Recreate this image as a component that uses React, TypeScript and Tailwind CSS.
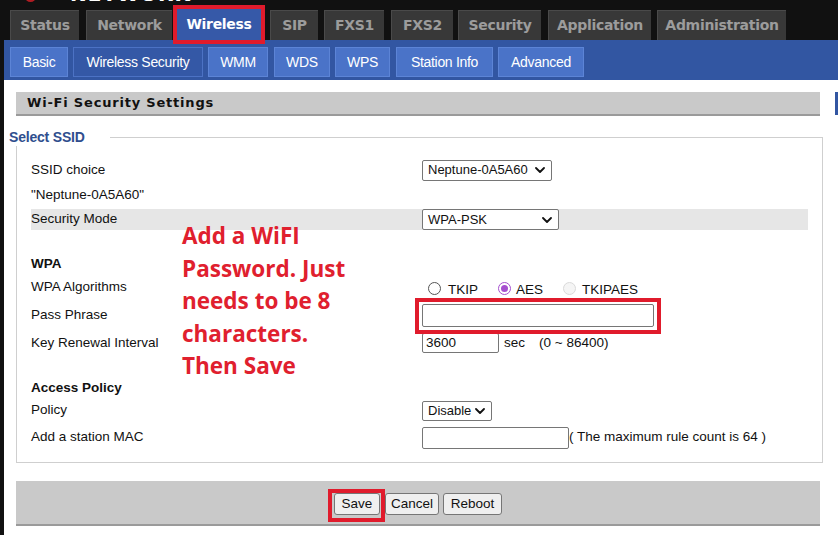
import type { ReactNode } from "react";

const topTabs = [
  { label: "Status", cls: "ml-[10px] w-[69px]" },
  { label: "Network", cls: "ml-[7px] w-[86px]" },
  { label: "Wireless", cls: "ml-[5px] w-[84px]", active: true },
  { label: "SIP", cls: "ml-[9px] w-[48px]" },
  { label: "FXS1", cls: "ml-[6px] w-[60px]" },
  { label: "FXS2", cls: "ml-[7px] w-[62px]" },
  { label: "Security", cls: "ml-[5px] w-[83px]" },
  { label: "Application", cls: "ml-[7px] w-[103px]" },
  { label: "Administration", cls: "ml-[6px] w-[129px]" },
];

const subTabs = [
  { label: "Basic", cls: "ml-[6px] w-[58px]" },
  { label: "Wireless Security", cls: "ml-[5px] w-[130px]", active: true },
  { label: "WMM", cls: "ml-[5px] w-[60px]" },
  { label: "WDS", cls: "ml-[6px] w-[56px]" },
  { label: "WPS", cls: "ml-[5px] w-[55px]" },
  { label: "Station Info", cls: "ml-[6px] w-[97px]" },
  { label: "Advanced", cls: "ml-[5px] w-[86px]" },
];

function Chevron() {
  return (
    <svg viewBox="0 0 10 6" className="w-[10px] h-[6px] shrink-0" fill="none" stroke="#111" strokeWidth={1.8}>
      <path d="M1 1l4 4 4-4" strokeLinecap="round" strokeLinejoin="round" />
    </svg>
  );
}

// red highlight box drawn over an element
function Mark({ children, box }: { children: ReactNode; box: string }) {
  return (
    <div className="relative">
      {children}
      <span className={`absolute border-4 border-[#e01b2c] pointer-events-none ${box}`} />
    </div>
  );
}

function Select({ value, cls }: { value: string; cls: string }) {
  return (
    <div className={`flex items-center justify-between border border-[#767676] rounded-[2px] bg-white pl-[5px] pr-[6px] text-[13px] ${cls}`}>
      <span>{value}</span>
      <Chevron />
    </div>
  );
}

function Row({ label, cls, children, bold }: { label?: string; cls: string; children?: ReactNode; bold?: boolean }) {
  return (
    <div className={`flex items-center ${cls}`}>
      <div className={`w-[391px] shrink-0 ${bold ? "font-bold" : ""}`}>{label}</div>
      <div className="flex items-center">{children}</div>
    </div>
  );
}

function Radio({ state }: { state: "off" | "on" | "disabled" }) {
  if (state === "on")
    return (
      <span className="w-[13px] h-[13px] shrink-0 rounded-full border-[1.5px] border-[#a64fcf] flex items-center justify-center">
        <span className="w-[7px] h-[7px] rounded-full bg-[#a64fcf]" />
      </span>
    );
  return (
    <span
      className={`block w-[13px] h-[13px] shrink-0 rounded-full border ${
        state === "off" ? "border-[#555] bg-white" : "border-[#dadada] bg-[#f5f5f5]"
      }`}
    />
  );
}

export default function App() {
  return (
    <div className="relative w-[838px] h-[535px] overflow-hidden bg-[#111] font-['Liberation_Sans',Arial,sans-serif] text-[13.5px] text-[#111]">
      {/* logo remnant at the very top */}
      <div className="h-[10px] overflow-hidden flex items-start pl-[25px]">
        <span className="-mt-[9px] w-[11px] h-[11px] rounded-full bg-[#b01c22]" />
        <span className="ml-[34px] -mt-[16px] text-[20px] leading-[20px] font-bold text-white font-['DejaVu_Sans',sans-serif] tracking-[1px]">
          NETWORK
        </span>
      </div>

      {/* top tabs */}
      <div className="flex items-end h-[30px]">
        {topTabs.map((t) =>
          t.active ? (
            <div key={t.label} className={t.cls}>
              <Mark box="-inset-[4px]">
                <div className="h-[31px] bg-[#3659a8] text-white flex items-center justify-center font-bold text-[14px] font-['DejaVu_Sans',sans-serif] tracking-[-0.3px]">
                  {t.label}
                </div>
              </Mark>
            </div>
          ) : (
            <div
              key={t.label}
              className={`${t.cls} h-[30px] bg-[#383838] border-t border-l border-[#4a4a4a] text-[#9c9c9c] flex items-center justify-center font-bold text-[14px] font-['DejaVu_Sans',sans-serif] tracking-[-0.3px]`}
            >
              {t.label}
            </div>
          )
        )}
      </div>

      <div className="flex">
        <div className="w-[4px] shrink-0" />
        <div className="flex-1 bg-white h-[495px]">
          {/* sub navigation */}
          <div className="h-[40px] bg-[#3256a2] flex items-start pt-[7px]">
            {subTabs.map((t) => (
              <div
                key={t.label}
                className={`${t.cls} h-[30px] flex items-center justify-center text-white text-[14px] tracking-[-0.3px] border ${
                  t.active ? "bg-[#3458a6] border-[#4c72c4]" : "bg-[#4a73c8] border-[#5c84d6]"
                }`}
              >
                {t.label}
              </div>
            ))}
          </div>

          {/* section header */}
          <div className="flex mt-[12px]">
            <div className="ml-[12px] w-[804px] h-[24px] bg-[#c9c9c9] border-b-2 border-[#9a9a9a] flex items-center pl-[11px] font-bold text-[13px] tracking-[0.8px] font-['DejaVu_Sans',sans-serif] text-[#111]">
              Wi-Fi Security Settings
            </div>
            <div className="ml-[15px] w-[3px] h-[23px] bg-[#3256a2]" />
          </div>

          {/* legend */}
          <div className="flex items-start h-[18px] mt-[12px]">
            <div className="ml-[5px] w-[101px] font-bold text-[14px] leading-[18px] text-[#2f4e8e] tracking-[-0.2px]">Select SSID</div>
            <div className="flex-1 mr-[15px] mt-[9px] h-[9px] border-t border-r border-[#cfcfcf]" />
          </div>

          {/* fieldset */}
          <div className="ml-[12px] w-[807px] border-x border-b border-[#cfcfcf] pt-[13px] pb-[9px] px-[14px]">
            <Row label="SSID choice" cls="h-[22px]">
              <Select value="Neptune-0A5A60" cls="w-[130px] h-[21px]" />
            </Row>
            <Row label={'"Neptune-0A5A60"'} cls="h-[28px]" />
            <Row label="Security Mode" cls="h-[21px] bg-[#e6e6e6]">
              <Select value="WPA-PSK" cls="w-[137px] h-[21px]" />
            </Row>
            <div className="h-[23px]" />
            <Row label="WPA" cls="h-[22px]" bold />
            <Row label="WPA Algorithms" cls="h-[25px]">
              <div className="flex items-center pl-[6px] pt-[1px]">
                <Radio state="off" />
                <span className="ml-[7px] mt-[4px]">TKIP</span>
                <span className="ml-[20px]">
                  <Radio state="on" />
                </span>
                <span className="ml-[5px] mt-[4px]">AES</span>
                <span className="ml-[20px]">
                  <Radio state="disabled" />
                </span>
                <span className="ml-[6px] mt-[4px]">TKIPAES</span>
              </div>
            </Row>
            <Row label="Pass Phrase" cls="h-[30px]">
              <Mark box="-left-[7px] -right-[7px] -top-[6px] -bottom-[7px]">
                <div className="w-[232px] h-[23px] border border-[#767676] rounded-[2px]" />
              </Mark>
            </Row>
            <Row label="Key Renewal Interval" cls="h-[26px]">
              <div className="w-[77px] h-[20px] border border-[#767676] rounded-[2px] flex items-center pl-[3px]">3600</div>
              <span className="ml-[5px]">sec</span>
              <span className="ml-[14px]">(0 ~ 86400)</span>
            </Row>
            <div className="h-[21px]" />
            <Row label="Access Policy" cls="h-[22px]" bold />
            <Row label="Policy" cls="h-[23px]">
              <Select value="Disable" cls="w-[70px] h-[20px] pr-[5px]" />
            </Row>
            <Row label="Add a station MAC" cls="h-[31px]">
              <div className="w-[147px] h-[22px] border border-[#767676] rounded-[2px]" />
              <span>( The maximum rule count is 64 )</span>
            </Row>
          </div>

          {/* button bar */}
          <div className="mt-[18px] ml-[12px] w-[804px] h-[45px] bg-[#c9c9c9] border-b-2 border-[#9a9a9a] flex items-center justify-center gap-[4px] pt-[2px]">
            <div className="mr-[1px]">
              <Mark box="-left-[6px] -right-[5px] -top-[4px] -bottom-[7px]">
                <button type="button" className="block h-[22px] w-[46px] bg-[#efefef] border border-[#767676] rounded-[3px]">
                  Save
                </button>
              </Mark>
            </div>
            <button type="button" className="h-[22px] w-[54px] bg-[#efefef] border border-[#767676] rounded-[3px]">
              Cancel
            </button>
            <button type="button" className="h-[22px] w-[59px] bg-[#efefef] border border-[#767676] rounded-[3px]">
              Reboot
            </button>
          </div>
        </div>
      </div>

      {/* annotation */}
      <div className="absolute left-[182px] top-[220px] text-[22.5px] leading-[32.5px] font-bold text-[#e0202e] font-['Open_Sans',sans-serif]">
        <div>Add a WiFI</div>
        <div>Password. Just</div>
        <div>needs to be 8</div>
        <div>characters.</div>
        <div>Then Save</div>
      </div>
    </div>
  );
}
